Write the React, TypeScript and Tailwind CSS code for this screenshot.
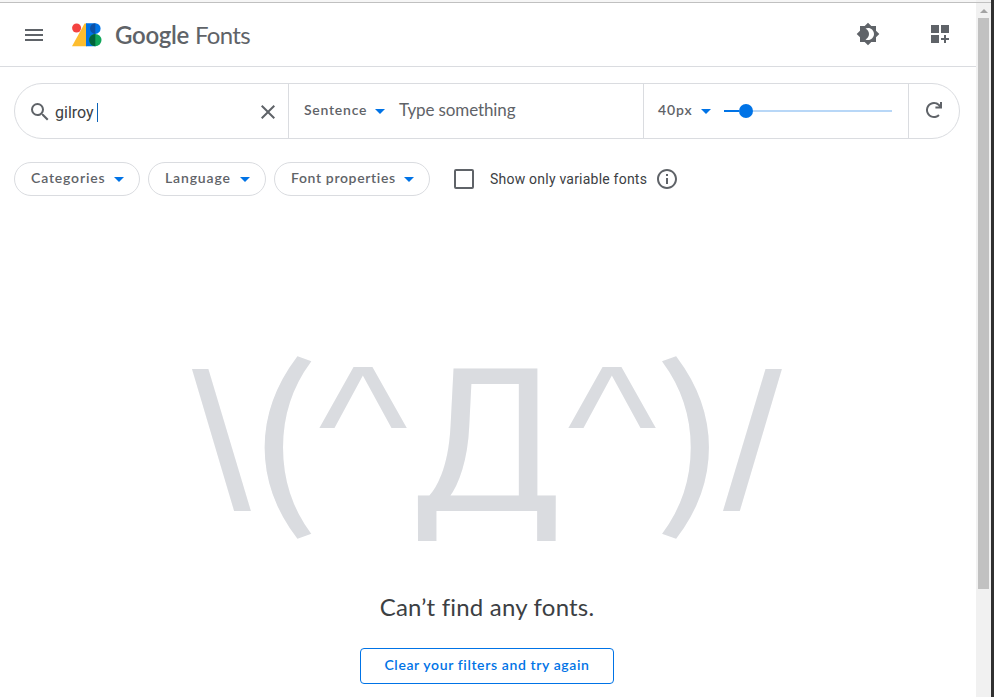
import type { ReactNode } from 'react';

const SANS = "font-['Lato','Liberation_Sans',sans-serif]";
const LABEL = 'whitespace-nowrap pb-[3px] text-[14px] font-semibold leading-5';

function Icon({ d, size = 24, className = '' }: { d: string; size?: number; className?: string }) {
  return (
    <svg viewBox="0 0 24 24" width={size} height={size} fill="currentColor" className={`shrink-0 ${className}`}>
      <path d={d} />
    </svg>
  );
}

const Caret = ({ className = '' }: { className?: string }) => (
  <svg viewBox="0 0 10 5" width="10" height="5" className={`shrink-0 text-[#0073e6] ${className}`} fill="currentColor">
    <path d="M0 0h10L5 5z" />
  </svg>
);

function Chip({ look, children }: { look: string; children: ReactNode }) {
  return (
    <button className={`flex h-[34px] items-center justify-between rounded-full border border-[#dadce0] pl-4 pr-[15px] ${look}`}>
      <span className={LABEL}>{children}</span>
      <Caret className="mt-px" />
    </button>
  );
}

function Glyph({ cell, look, children }: { cell: string; look: string; children: ReactNode }) {
  return (
    <span className={`flex shrink-0 ${cell}`}>
      <span className={`block shrink-0 ${look}`}>{children}</span>
    </span>
  );
}

const SLASH = "font-['Liberation_Sans',sans-serif] origin-top-left [transform:translateY(3.6px)_scale(1.06,0.966)]";
const HAT = "font-['Liberation_Sans',sans-serif] origin-top-left [transform:translate(-0.5px,2px)_scale(0.95,0.84)]";
const PAREN = "font-['Noto_Sans_CJK_SC',sans-serif] [-webkit-text-stroke:1.5px_#dadce0]";

function Logo() {
  return (
    <svg viewBox="0 0 30 24" width="30" height="24" className="shrink-0">
      <circle cx="4.6" cy="5" r="4.5" fill="#f44340" />
      <path d="M0 23.3 12.6 .4H15v22.9z" fill="#fdbd2e" />
      <path d="M14 .3h9.3a5.2 5.2 0 0 1 0 10.6v12.4H14z" fill="#0073e6" />
      <path d="M23.3.3v10.6a5.3 5.3 0 0 1 0-10.6z" fill="#0d50a5" />
      <circle cx="23.3" cy="17.1" r="6.2" fill="#0fa65a" />
      <path d="M23.3 10.9v12.4a6.2 6.2 0 0 1 0-12.4z" fill="#01623c" />
    </svg>
  );
}

export default function App() {
  return (
    <div className={`flex h-[697px] w-[994px] flex-col overflow-hidden bg-white text-[#5f6368] ${SANS}`}>
      <div className="flex min-h-0 flex-1">
        <div className="flex w-[976px] flex-col">
          <div className="h-[3px] shrink-0 border-b border-[#c0c0c0] bg-[#f6f6f6]" />
          <header className="flex h-16 shrink-0 items-center border-b border-[#dadce0] pl-[22px]">
            <Icon d="M3 18h18v-2H3v2zm0-5h18v-2H3v2zm0-7v2h18V6H3z" />
            <div className="ml-[26px] flex items-center">
              <Logo />
              <div className="ml-[13px] flex whitespace-nowrap text-[24px] leading-8">
                <span className="w-[80px] font-semibold tracking-[-0.3px]">Google</span>
                <span className="tracking-[-0.7px]">Fonts</span>
              </div>
            </div>
            <Icon
              className="mb-[2px] ml-auto mr-12"
              d="M20 8.69V4h-4.69L12 .69 8.69 4H4v4.69L.69 12 4 15.31V20h4.69L12 23.31 15.31 20H20v-4.69L23.31 12 20 8.69zM12 18c-.89 0-1.74-.2-2.5-.55C11.56 16.5 13 14.42 13 12s-1.44-4.5-3.5-5.45C10.26 6.2 11.11 6 12 6c3.31 0 6 2.69 6 6s-2.69 6-6 6z"
            />
            <Icon className="mb-[2px] mr-6" d="M3 3h8v8H3zM13 3h8v8h-8zM3 13h8v8H3zM16 13h2v3h3v2h-3v3h-2v-3h-3v-2h3z" />
          </header>

          <div className="ml-[14px] mt-4 flex h-14 w-[946px] shrink-0 rounded-full border border-[#dadce0]">
            <div className="flex w-[274px] items-center border-r border-[#dadce0] pl-[13px]">
              <Icon className="mt-[2px]" d="M15.5 14h-.79l-.28-.27A6.471 6.471 0 0 0 16 9.5 6.5 6.5 0 1 0 9.5 16c1.61 0 3.09-.59 4.23-1.57l.27.28v.79l5 4.99L20.49 19l-4.99-5zm-6 0C7.01 14 5 11.99 5 9.5S7.01 5 9.5 5 14 7.01 14 9.5 11.99 14 9.5 14z" />
              <span className="ml-[3px] mt-[3px] font-['Roboto',sans-serif] text-base leading-5 text-[#3c4043]">gilroy</span>
              <span className="ml-[3px] mt-[2px] h-[19px] w-px bg-[#0b63b8]" />
              <Icon className="ml-auto mr-2 mt-[2px]" d="M19 6.41 17.59 5 12 10.59 6.41 5 5 6.41 10.59 12 5 17.59 6.41 19 12 13.41 17.59 19 19 17.59 13.41 12z" />
            </div>
            <div className="flex w-[355px] items-center border-r border-[#dadce0] pl-[15px]">
              <span className={`w-[71px] tracking-[0.75px] ${LABEL}`}>Sentence</span>
              <Caret />
              <span className="ml-[14px] whitespace-nowrap pb-[2px] text-[17px] tracking-[-0.12px]">Type something</span>
            </div>
            <div className="flex w-[265px] items-center border-r border-[#dadce0] pl-[14px]">
              <span className={`w-[43px] tracking-[0.85px] ${LABEL}`}>40px</span>
              <Caret />
              <div className="ml-[13px] flex w-[168px] items-center">
                <div className="h-[2px] w-[15px] bg-[#0073e6]" />
                <div className="size-[14px] rounded-full bg-[#0073e6]" />
                <div className="h-[2px] flex-1 bg-[#b8d7f7]" />
              </div>
            </div>
            <div className="flex flex-1 items-center pb-[2px] pl-[13px]">
              <Icon d="M17.65 6.35A7.958 7.958 0 0 0 12 4a8 8 0 1 0 5.65 13.65l-1.42-1.42A6 6 0 1 1 12 6c1.66 0 3.14.69 4.22 1.78L17 8.6h-3.6v2H20V4h-2v2.7z" />
            </div>
          </div>

          <div className="ml-[14px] mt-[23px] flex h-[34px] shrink-0 items-center gap-2">
            <Chip look="w-[126px] tracking-[0.83px]">Categories</Chip>
            <Chip look="w-[118px] tracking-[0.85px]">Language</Chip>
            <Chip look="w-[156px] tracking-[0.64px]">Font properties</Chip>
            <div className="ml-4 size-5 rounded-[2px] border-2 border-[#5f6368]" />
            <span className="ml-2 w-[157px] whitespace-nowrap font-['Roboto',sans-serif] text-[14px] tracking-[0.22px] text-[#3c4043]">Show only variable fonts</span>
            <Icon
              d="M11 7h2v2h-2zm0 4h2v6h-2zm1-9C6.48 2 2 6.48 2 12s4.48 10 10 10 10-4.48 10-10S17.52 2 12 2zm0 18c-4.41 0-8-3.59-8-8s3.59-8 8-8 8 3.59 8 8-3.59 8-8 8z"
            />
          </div>

          <main className="flex flex-1 flex-col items-center">
            <div className="ml-[-2px] mt-[127px] flex h-[240px] w-[590px] shrink-0 whitespace-nowrap text-[200px] leading-[240px] text-[#dadce0]">
              <Glyph cell="w-[59px]" look={SLASH}>\</Glyph>
              <Glyph cell="ml-[13px] w-[48px]" look={`${PAREN} origin-top-left [transform:translate(-18.8px,-5px)_scale(1.1,0.893)]`}>(</Glyph>
              <Glyph cell="ml-[7px] w-[87px]" look={HAT}>^</Glyph>
              <Glyph cell="ml-[12px] w-[138px]" look="font-['Roboto',sans-serif] origin-top-left [transform:translateX(-5px)_scaleX(0.986)] [clip-path:inset(0_0_22px_0)]">Д</Glyph>
              <Glyph cell="ml-[12px] w-[87px]" look={HAT}>^</Glyph>
              <Glyph cell="ml-[7px] w-[48px] justify-end" look={`${PAREN} origin-top-right [transform:translate(18.8px,-5px)_scale(1.1,0.893)]`}>)</Glyph>
              <Glyph cell="ml-[13px] w-[59px]" look={SLASH}>/</Glyph>
            </div>
            <p className="ml-[-2px] mt-[28px] whitespace-nowrap text-[24px] leading-8 tracking-[0.2px] text-[#3c4043]">Can’t find any fonts.</p>
            <button className="ml-[-2px] mt-[25px] flex h-9 w-[254px] items-center justify-center rounded border border-[#0073e6] text-[#0073e6]">
              <span className={`tracking-[0.62px] ${LABEL}`}>Clear your filters and try again</span>
            </button>
          </main>
        </div>

        <div className="flex w-[15px] flex-col bg-[#f1f1f1]">
          <div className="h-[3px] border-b border-[#c0c0c0]" />
          <div className="flex h-[15px] items-center justify-center">
            <svg viewBox="0 0 8 4" width="8" height="4" fill="#a3a3a3">
              <path d="M4 0 8 4H0z" />
            </svg>
          </div>
          <div className="ml-[2px] h-[571px] w-[11px] bg-[#c1c1c1]" />
        </div>
        <div className="w-[3px] bg-[#303030]" />
      </div>
    </div>
  );
}
